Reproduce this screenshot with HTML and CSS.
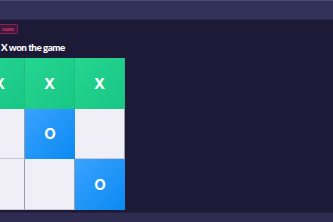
FILE: index.html
```html
<!DOCTYPE html>
<html>
<head>
<meta charset="utf-8">
<link rel="stylesheet" href="styles.css">
</head>
<body>
<div class="app">
  <header class="topbar"></header>
  <main class="main">
    <span class="badge">GAME</span>
    <h1 class="status">X won the game</h1>
    <div class="board">
      <div class="cell win">X</div>
      <div class="cell win">X</div>
      <div class="cell win">X</div>
      <div class="cell empty"></div>
      <div class="cell o">O</div>
      <div class="cell empty"></div>
      <div class="cell empty"></div>
      <div class="cell empty"></div>
      <div class="cell o">O</div>
    </div>
  </main>
  <footer class="bottombar"></footer>
</div>
</body>
</html>
```
FILE: styles.css
```css
* { box-sizing: border-box; }
html, body { margin: 0; padding: 0; }
body {
  width: 333px;
  height: 222px;
  overflow: hidden;
  background: #1c1a36;
  font-family: Inter, "Liberation Sans", sans-serif;
}
.app {
  display: flex;
  flex-direction: column;
  height: 222px;
}
.topbar {
  height: 20px;
  background: #33335a;
  border-top: 1px solid #4a4a72;
  border-bottom: 1px solid #28284a;
}
.main {
  flex: 1;
  display: flex;
  flex-direction: column;
  align-items: flex-start;
  padding-top: 4px;
}
.badge {
  display: block;
  height: 10px;
  padding: 0 3px 0 2px;
  font-size: 4px;
  line-height: 9px;
  font-weight: 600;
  color: #e0356a;
  background: #3a1a3e;
  border: 1px solid #8a2250;
  border-left: none;
  border-radius: 0 2px 2px 0;
}
.status {
  margin: 7px 0 0 1px;
  font-family: Lato, "Liberation Sans", sans-serif;
  font-size: 9.8px;
  line-height: 12px;
  font-weight: 900;
  letter-spacing: -0.5px;
  color: #ffffff;
}
.board {
  margin: 5px 0 0 -25px;
  display: grid;
  grid-template-columns: repeat(3, 50px);
  grid-template-rows: 50.5px 50.5px 51px;
}
.cell {
  display: flex;
  align-items: center;
  justify-content: center;
  font-size: 15px;
  font-weight: 700;
  color: #ffffff;
}
.win {
  background: linear-gradient(135deg, #26d58f, #17c784);
  border-right: 1px solid #1fbf80;
}
.o {
  background: linear-gradient(135deg, #3aa2ff, #0a8af2);
}
.empty {
  background: #f0eff8;
  border-right: 1px solid #9a9aa8;
  border-bottom: 1px solid #c8c8d4;
}
.bottombar {
  height: 10px;
  background: #2e2c50;
  border-top: 1px solid #24233f;
}
```
